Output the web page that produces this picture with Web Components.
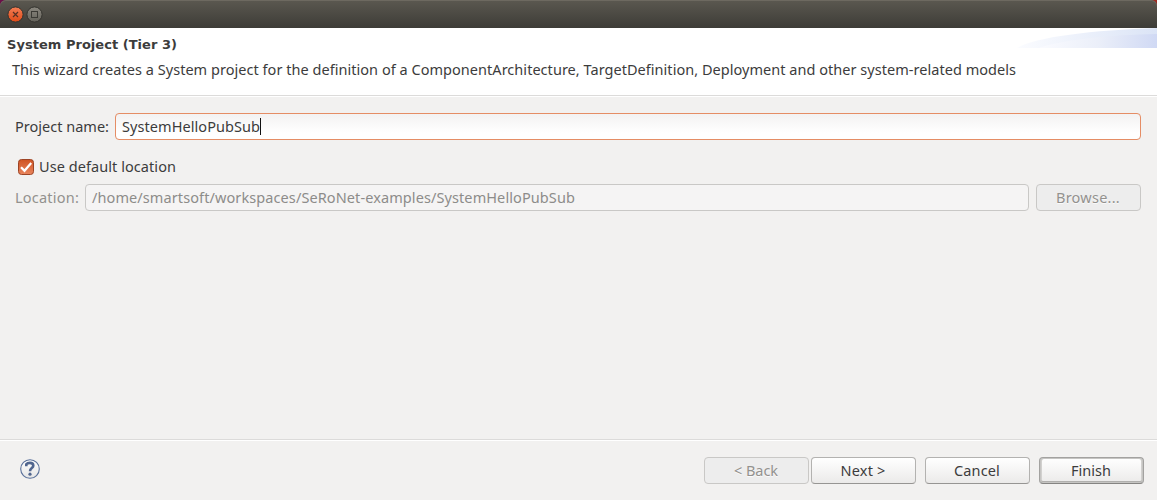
<!DOCTYPE html>
<html lang="en">
<head>
<meta charset="utf-8">
<title>System Project</title>
<style>
html,body{margin:0;height:100%;overflow:hidden}
body{font:14.5px/18px "Noto Sans","Open Sans",sans-serif;color:#3c3c3c;background:#f2f1f0}
</style>
</head>
<body>
<wizard-window></wizard-window>
<script>
// Text run whose tracking is adjusted so that it fills the given width.
class FitText extends HTMLElement {
  connectedCallback() {
    const root = this.attachShadow({mode: 'open'});
    root.innerHTML = `<style>:host{display:inline-block;flex:none;white-space:pre}span{display:inline-block}</style><span><slot></slot></span>`;
    const span = root.querySelector('span');
    const target = Number(this.getAttribute('width'));
    const natural = span.getBoundingClientRect().width;
    span.style.letterSpacing = ((target - natural) / this.textContent.length) + 'px';
    this.style.width = target + 'px';
  }
}
class TitleBar extends HTMLElement {
  constructor() {
    super();
    this.attachShadow({mode: 'open'}).innerHTML = `<style>
:host{display:block;height:28px;background:linear-gradient(90deg,#6b1048 0 6px,#9b2a22 6px)}
.bar{height:28px;box-sizing:border-box;border-radius:6px 6px 0 0;background:linear-gradient(#5b5850,#3d3c37);box-shadow:inset 0 1px #6d6960;padding:6px 0 0 7px}
svg{display:block}
</style><div class="bar"><svg width="38" height="18" viewBox="0 0 38 18">
<defs><linearGradient id="o" x2="0" y2="1"><stop stop-color="#f37e55"/><stop offset="1" stop-color="#df4a17"/></linearGradient>
<linearGradient id="g" x2="0" y2="1"><stop stop-color="#8b887f"/><stop offset="1" stop-color="#63615a"/></linearGradient></defs>
<circle cx="8.5" cy="8.5" r="7.6" fill="url(#o)" stroke="#34332e"/>
<path d="M6 6l5 5M11 6l-5 5" stroke="#563024" stroke-width="1.2" fill="none"/>
<circle cx="27.5" cy="8.5" r="7.6" fill="url(#g)" stroke="#34332e"/>
<rect x="24.5" y="5.5" width="6" height="6" fill="none" stroke="#3b3a35"/></svg></div>`;
  }
}
class WizardHeader extends HTMLElement {
  constructor() {
    super();
    this.attachShadow({mode: 'open'}).innerHTML = `<style>
:host{display:grid;grid-template-columns:1fr 140px;grid-template-rows:32px 35px;height:67px;background:#fff;border-bottom:1px solid #dcdbda;box-shadow:0 1px #fff}
.title{font:bold 13px/16px "DejaVu Sans",sans-serif;padding:9px 0 0 7px}
.desc{grid-column:1/3;padding:0 0 0 12px}
svg{display:block}
</style><div class="title"><slot name="title"></slot></div>
<svg width="140" height="20" viewBox="0 0 140 20"><defs>
<linearGradient id="a"><stop stop-color="#fbfcff"/><stop offset="1" stop-color="#dbe4f6"/></linearGradient>
<linearGradient id="b"><stop stop-color="#fafbff"/><stop offset=".5" stop-color="#ebeff9"/><stop offset="1" stop-color="#d0d9f4"/></linearGradient></defs>
<path d="M0 20C18 9 76 2 140 0V20Z" fill="url(#a)"/><path d="M22 20C48 11 92 7 140 6V20Z" fill="url(#b)"/></svg>
<div class="desc"><slot name="description"></slot></div>`;
  }
}
class TextField extends HTMLElement {
  constructor() {
    super();
    this.attachShadow({mode: 'open'}).innerHTML = `<style>
:host{display:flex;flex:1;align-items:center;box-sizing:border-box;height:27px;padding:0 6px;border:1px solid #e58d65;border-radius:4px;background:linear-gradient(#f3f2f2,#fff 75%) padding-box}
:host([disabled]){border-color:#c9c8c6;background:#f5f4f4;color:#8d8c8a}
i{width:1px;height:17px;background:#111;flex:none}
:host([disabled]) i{display:none}
</style><slot></slot><i></i>`;
  }
}
class PushButton extends HTMLElement {
  constructor() {
    super();
    this.attachShadow({mode: 'open'}).innerHTML = `<style>
:host{display:flex;flex:none;align-items:center;justify-content:center;box-sizing:border-box;width:105px;height:27px;padding-right:1px;border:1px solid #b3b2b0;border-bottom-color:#969593;border-radius:4px;background:linear-gradient(#fff,#ebeae9) padding-box}
:host([disabled]){border-color:#c9c8c6;background:#ededed;color:#93918e;text-shadow:0 1px #fafafa}
:host([default]){border-color:#a3a2a0 #a3a2a0 #858482;box-shadow:inset 0 0 0 1px #c6c5c3,inset 0 -2px #b1b0ae,inset 1px 0 0 1px #d2d1cf,inset -1px 0 0 1px #d2d1cf}
</style><slot></slot>`;
  }
}
class CheckBox extends HTMLElement {
  constructor() {
    super();
    this.attachShadow({mode: 'open'}).innerHTML = `<style>
:host{display:flex;align-items:center;gap:4px;height:20px;padding-left:2px}svg{display:block}
</style><svg width="18" height="18" viewBox="0 0 18 18"><defs><linearGradient id="c" x2="0" y2="1"><stop stop-color="#cf5322"/><stop offset="1" stop-color="#e9855d"/></linearGradient></defs>
<rect x="1.5" y="1.5" width="15" height="15" rx="3" fill="url(#c)" stroke="#9d4425"/>
<path d="M4 9.2L7.5 12.8L14.2 5" fill="none" stroke="#fff" stroke-width="2.2"/></svg><slot></slot>`;
  }
}
class HelpButton extends HTMLElement {
  constructor() {
    super();
    this.attachShadow({mode: 'open'}).innerHTML = `<style>
:host{display:block;width:20px;height:20px}svg{display:block}
</style><svg width="20" height="20" viewBox="0 0 20 20"><defs><linearGradient id="h" x2="0" y2="1"><stop stop-color="#fff"/><stop offset="1" stop-color="#e5e5e5"/></linearGradient></defs>
<circle cx="10" cy="10" r="9.3" fill="url(#h)" stroke="#59709a" stroke-width="1.1"/>
<path d="M6.3 7.2V5.2C7.3 3.9 9 3.9 10 3.9C12.2 3.9 13.3 5 13.3 6.7C13.3 9.2 10 9 10 12.2" fill="none" stroke="#51668f" stroke-width="2.6"/>
<circle cx="10" cy="15.2" r="1.6" fill="#51668f"/></svg>`;
  }
}
class WizardWindow extends HTMLElement {
  constructor() {
    super();
    this.attachShadow({mode: 'open'}).innerHTML = `<style>
:host{display:flex;flex-direction:column;width:1157px;height:500px;background:#f2f1f0}
main{flex:1;display:flex;flex-direction:column;padding:17px 16px 0 15px}
.row{display:flex;align-items:center;height:27px}
.name{gap:6px}
check-box{margin:17px 0 7px}
.row fit-text{margin-bottom:1px}
check-box fit-text{margin-bottom:2px}
.location{gap:6px;color:#93918e}
.location push-button{margin-left:1px}
footer{box-sizing:border-box;height:61px;border-top:1px solid #dcdbda;box-shadow:inset 0 1px #fff;display:flex;align-items:center;padding:0 13px 0 20px}
help-button{margin-bottom:2px}
.buttons{display:flex;margin-left:auto}
.buttons :nth-child(2){margin-left:2px}.buttons push-button:nth-child(n+3){margin-left:9px}
</style>
<title-bar></title-bar>
<wizard-header><fit-text slot="title" width="170">System Project (Tier 3)</fit-text><fit-text slot="description" width="1004">This wizard creates a System project for the definition of a ComponentArchitecture, TargetDefinition, Deployment and other system-related models</fit-text></wizard-header>
<main>
<div class="row name"><fit-text width="94">Project name:</fit-text><text-field><fit-text width="138">SystemHelloPubSub</fit-text></text-field></div>
<check-box><fit-text width="137">Use default location</fit-text></check-box>
<div class="row location"><fit-text width="64">Location:</fit-text><text-field disabled><fit-text width="483">/home/smartsoft/workspaces/SeRoNet-examples/SystemHelloPubSub</fit-text></text-field><push-button disabled><fit-text width="64">Browse...</fit-text></push-button></div>
</main>
<footer><help-button></help-button><div class="buttons"><push-button disabled><fit-text width="44">&lt; Back</fit-text></push-button><push-button><fit-text width="45">Next &gt;</fit-text></push-button><push-button><fit-text width="46">Cancel</fit-text></push-button><push-button default><fit-text width="40">Finish</fit-text></push-button></div></footer>`;
  }
}
customElements.define('title-bar', TitleBar);
customElements.define('wizard-header', WizardHeader);
customElements.define('text-field', TextField);
customElements.define('push-button', PushButton);
customElements.define('check-box', CheckBox);
customElements.define('help-button', HelpButton);
customElements.define('wizard-window', WizardWindow);
customElements.define('fit-text', FitText);
</script>
</body>
</html>
